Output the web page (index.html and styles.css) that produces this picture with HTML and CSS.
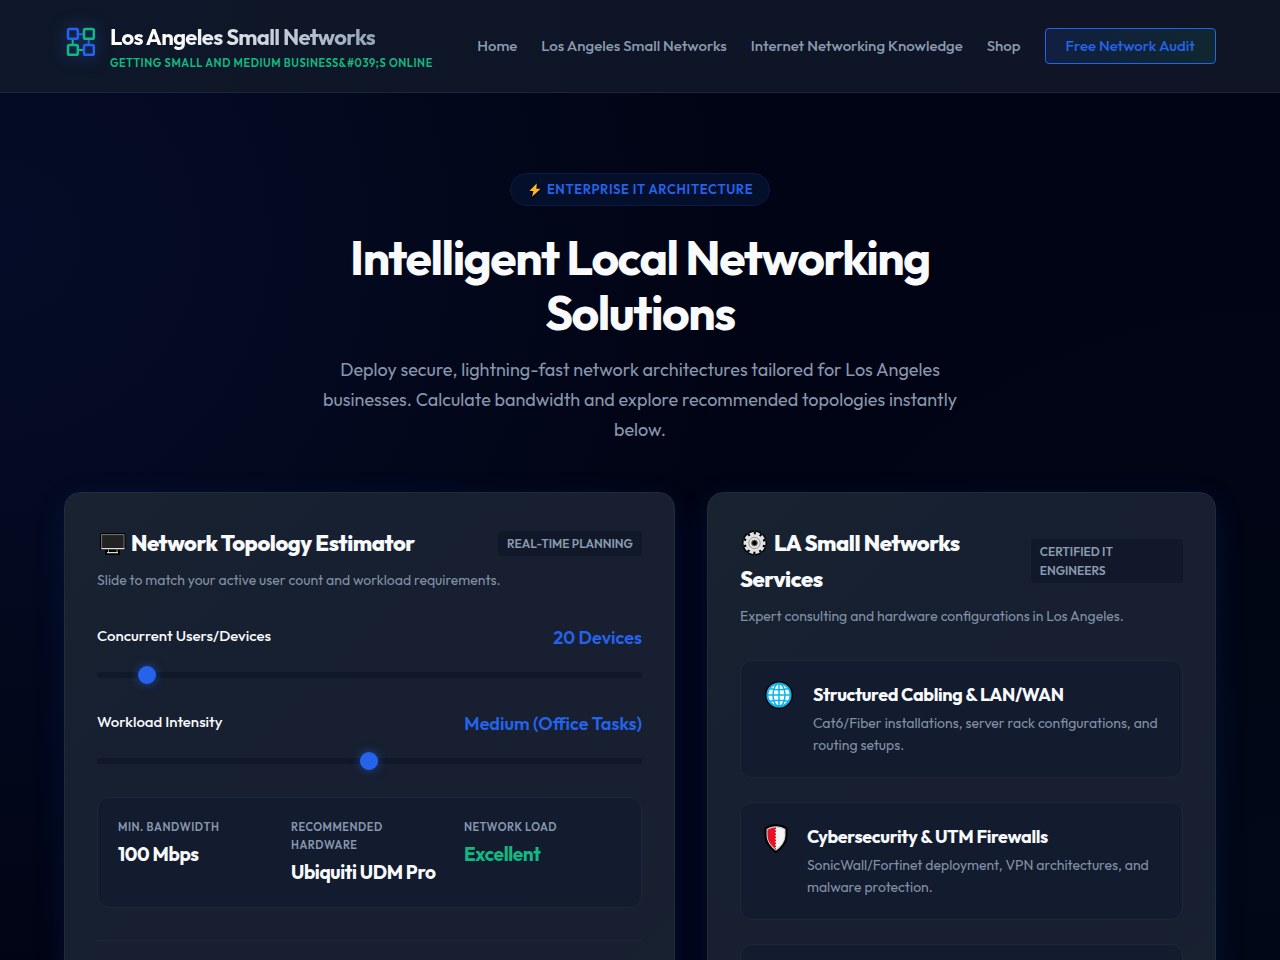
FILE: index.html
```html
<!DOCTYPE html>
<html lang="en">
<head>
<meta charset="utf-8">
<meta name="viewport" content="width=device-width, initial-scale=1">
<title>Los Angeles Small Networks</title>
<link rel="stylesheet" href="styles.css">
</head>
<body>
<header class="site-header">
  <div class="container header-inner">
    <div class="brand">
      <svg class="brand-logo" viewBox="0 0 34 34" fill="none" stroke-width="2.5" aria-hidden="true">
        <path d="M14 9.2H20M24.7 14V20" stroke="#2563eb" stroke-width="2"/>
        <path d="M8.7 14V20M14 25H20" stroke="#10b981" stroke-width="2"/>
        <rect x="4" y="4" width="9.8" height="9.8" rx="1.6" stroke="#2563eb"/>
        <rect x="20" y="4" width="9.8" height="9.8" rx="1.6" stroke="#10b981"/>
        <rect x="4" y="20" width="9.8" height="9.8" rx="1.6" stroke="#10b981"/>
        <rect x="20" y="20" width="9.8" height="9.8" rx="1.6" stroke="#2563eb"/>
      </svg>
      <div class="brand-text">
        <a class="brand-name" href="#">Los Angeles Small Networks</a>
        <span class="brand-tagline">Getting small and medium business&amp;#039;s online</span>
      </div>
    </div>
    <nav class="site-nav">
      <a class="nav-link" href="#">Home</a>
      <a class="nav-link" href="#">Los Angeles Small Networks</a>
      <a class="nav-link" href="#">Internet Networking Knowledge</a>
      <a class="nav-link" href="#">Shop</a>
      <a class="nav-cta" href="#">Free Network Audit</a>
    </nav>
  </div>
</header>
<main class="container">
  <section class="hero">
    <span class="hero-badge">
      <svg class="bolt" viewBox="0 0 12 14" aria-hidden="true"><path d="M7.6 1.2 1 7.8H4.6L3.4 12.8 11 5.8H7.2Z" fill="#fdb92c" stroke="#000" stroke-width="1.2" stroke-linejoin="round" paint-order="stroke"/></svg>
      Enterprise IT Architecture
    </span>
    <h1 class="hero-title">Intelligent Local Networking Solutions</h1>
    <p class="hero-text">Deploy secure, lightning-fast network architectures tailored for Los Angeles businesses. Calculate bandwidth and explore recommended topologies instantly below.</p>
  </section>
  <div class="panels">
    <section class="card">
      <div class="card-head">
        <h2 class="card-title"><svg class="title-icon" viewBox="0 0 34 28" aria-hidden="true">
          <path d="M4 5H27.500V20H4ZM9 20H22V25H9Z" fill="#000" stroke="#000" stroke-width="2" stroke-linejoin="round"/>
          <rect x="4.600" y="5.600" width="22.400" height="14" fill="#222" stroke="#777" stroke-width="1"/>
          <path d="M4.500 19.700H27.500M10 23.600H21" stroke="#ddd" stroke-width="1.200"/>
          <path d="M11.500 20.500V23M20 20.500V23" stroke="#999"/>
        </svg>Network Topology Estimator</h2>
        <span class="tag">Real-time Planning</span>
      </div>
      <p class="card-sub">Slide to match your active user count and workload requirements.</p>
      <div class="field">
        <div class="field-row">
          <label class="field-label" for="users">Concurrent Users/Devices</label>
          <output class="field-value" for="users">20 Devices</output>
        </div>
        <input class="slider" id="users" type="range" min="5" max="200" value="20">
      </div>
      <div class="field">
        <div class="field-row">
          <label class="field-label" for="load">Workload Intensity</label>
          <output class="field-value" for="load">Medium (Office Tasks)</output>
        </div>
        <input class="slider" id="load" type="range" min="1" max="3" value="2">
      </div>
      <dl class="stats">
        <div class="stat"><dt class="stat-label">Min. Bandwidth</dt><dd class="stat-value">100 Mbps</dd></div>
        <div class="stat"><dt class="stat-label">Recommended Hardware</dt><dd class="stat-value">Ubiquiti UDM Pro</dd></div>
        <div class="stat"><dt class="stat-label">Network Load</dt><dd class="stat-value good">Excellent</dd></div>
      </dl>
      <hr class="rule">
    </section>
    <section class="card">
      <div class="card-head">
        <h2 class="card-title"><svg class="title-icon" viewBox="0 0 34 28" aria-hidden="true">
          <g transform="translate(14.500 14)">
            <circle r="9.500" fill="none" stroke="#000" stroke-width="6" stroke-dasharray="4.460 1.508" stroke-dashoffset="2.230"/>
            <circle r="10.700" fill="#000"/>
            <circle r="9.500" fill="none" stroke="#e2e2e2" stroke-width="3" stroke-dasharray="3.900 2.069" stroke-dashoffset="1.950"/>
            <circle r="8.800" fill="#e2e2e2"/>
            <circle r="5.700" fill="none" stroke="#888" stroke-width=".8"/>
            <circle r="2.900" fill="#000" stroke="#777" stroke-width="1"/>
          </g>
        </svg>LA Small Networks Services</h2>
        <span class="tag">Certified IT Engineers</span>
      </div>
      <p class="card-sub">Expert consulting and hardware configurations in Los Angeles.</p>
      <ul class="services">
        <li class="service">
          <svg class="globe" viewBox="0 0 36 28" fill="none" aria-hidden="true">
            <circle cx="18" cy="14" r="13" fill="#fff" stroke="#000" stroke-width="2"/>
            <g stroke="#0bb3ee" stroke-width="1.500">
              <circle cx="18" cy="14" r="11.600" stroke-width="2"/>
              <ellipse cx="18" cy="14" rx="6" ry="11.600"/>
              <path d="M18 2V26M6 14H30M8.500 7.500Q18 10 27.500 7.500M8.500 20.500Q18 18 27.500 20.500"/>
            </g>
          </svg>
          <div class="service-body">
            <h3 class="service-title">Structured Cabling &amp; LAN/WAN</h3>
            <p class="service-text">Cat6/Fiber installations, server rack configurations, and routing setups.</p>
          </div>
        </li>
        <li class="service">
          <svg class="shield" viewBox="0 0 30 30" aria-hidden="true">
            <path d="M15 2.200Q21 2.200 25.500 5.500V13Q25 22 15 29Q5 22 4.500 13V5.500Q9 2.200 15 2.200Z" fill="#ccc" stroke="#000" stroke-width="2" stroke-linejoin="round"/>
            <path d="M15 4.600Q19.500 4.600 23.400 6.800V13Q23 20.500 15 26.400Z" fill="#f4f4f4"/>
            <path d="M15 4.600Q10.500 4.600 6.600 6.800V13Q7 20.500 15 26.400Z" fill="#e81224"/>
            <path d="M15.200 6V25" stroke="#f4f4f4" stroke-width="2" stroke-dasharray="1.500 1.500"/>
          </svg>
          <div class="service-body">
            <h3 class="service-title">Cybersecurity &amp; UTM Firewalls</h3>
            <p class="service-text">SonicWall/Fortinet deployment, VPN architectures, and malware protection.</p>
          </div>
        </li>
        <li class="service"></li>
      </ul>
    </section>
  </div>
</main>
</body>
</html>
```

FILE: styles.css
```css
* { box-sizing: border-box; margin: 0; padding: 0; }

body {
  color: #f8fafc;
  font-family: Outfit, Lato, "Noto Sans", sans-serif;
  font-size: 16px;
  background:
    radial-gradient(circle at 0% 25%, rgba(37, 99, 235, 0.09), transparent 50%) fixed,
    radial-gradient(circle at 100% 90%, rgba(16, 185, 129, 0.02), transparent 40%) fixed,
    #010414;
}

a { color: inherit; text-decoration: none; }

.container { max-width: 1280px; margin: 0 auto; padding: 0 64px; }

.site-header {
  background: linear-gradient(90deg, #0f182a, #0d1526 50%, #101526);
  border-bottom: 1px solid #1b2738;
}

.header-inner { display: flex; align-items: center; justify-content: space-between; min-height: 92px; }

.brand { display: flex; align-items: center; gap: 12px; }
.brand-logo { width: 34px; height: 34px; margin-bottom: 8px; filter: drop-shadow(0 0 8px rgba(37, 99, 235, 0.5)); }
.brand-text { display: flex; flex-direction: column; }

.brand-name {
  font-size: 22px;
  font-weight: 700;
  line-height: 34px;
  letter-spacing: -0.03em;
  background: linear-gradient(90deg, #fff 20%, #94a3b8);
  -webkit-background-clip: text;
  background-clip: text;
  color: transparent;
  align-self: flex-start;
}

.brand-tagline { color: #10b981; font-size: 11px; font-weight: 600; line-height: 18px; letter-spacing: 0.05em; text-transform: uppercase; }

.site-nav { display: flex; align-items: center; gap: 24px; color: #8b9ab0; font-size: 15px; font-weight: 500; line-height: 34px; white-space: nowrap; }

.nav-cta {
  padding: 0 20px;
  color: #2563eb;
  border: 1px solid #2563eb;
  border-radius: 4px;
  background: linear-gradient(90deg, #101f40, #10272f);
}

.hero { max-width: 680px; margin: 0 auto; padding: 80px 0 47px; text-align: center; }

.hero-badge {
  display: inline-flex;
  align-items: center;
  gap: 4px;
  padding: 0 16px;
  color: #2563eb;
  font-size: 13px;
  font-weight: 600;
  line-height: 31px;
  letter-spacing: 0.05em;
  text-transform: uppercase;
  background: #040f2b;
  border: 1px solid #0a1b46;
  border-radius: 17px;
  vertical-align: top;
}

.bolt { width: 16px; height: 16px; }

.hero-title { margin-top: 24px; font-size: 48px; font-weight: 700; line-height: 55px; letter-spacing: -0.03em; }
.hero-text { margin: 15px auto 0; color: #8796ad; font-size: 18px; line-height: 30px; }

.panels { display: grid; grid-template-columns: 1.2fr 1fr; gap: 32px; }

.card {
  padding: 32px;
  background: linear-gradient(135deg, #182230, #172030 25%, #171f30 60%, #182130);
  border: 1px solid #1e2c3c;
  border-radius: 16px;
  box-shadow: 0 8px 32px rgba(37, 99, 235, 0.12);
}

.card-head { display: flex; align-items: center; justify-content: space-between; }
.card-title { font-size: 22px; font-weight: 800; line-height: 36px; letter-spacing: -0.02em; }
.title-icon { width: 34px; height: 28px; vertical-align: -6px; }

.tag {
  padding: 3px 9px;
  color: #8a99ae;
  font-size: 12px;
  font-weight: 600;
  line-height: 19px;
  text-transform: uppercase;
  background: #10182a;
  border-radius: 4px;
}

.card-sub { margin-top: 8px; color: #8290a6; font-size: 14px; line-height: 22px; }

.field { margin-top: 26px; }
.card-sub + .field { margin-top: 33px; }
.field-row { display: flex; justify-content: space-between; line-height: 28px; }
.field-label { font-size: 15px; font-weight: 500; line-height: 24px; }
.field-value { color: #2563eb; font-size: 18px; font-weight: 600; }

.slider {
  display: block;
  width: 100%;
  height: 18px;
  margin-top: 14px;
  appearance: none;
  -webkit-appearance: none;
  background: none;
}

.slider::-webkit-slider-runnable-track { height: 6px; background: #10182a; border-radius: 3px; }

.slider::-webkit-slider-thumb {
  -webkit-appearance: none;
  width: 18px;
  height: 18px;
  margin-top: -6px;
  background: #2563eb;
  border-radius: 50%;
  box-shadow: 0 0 10px rgba(37, 99, 235, 0.6);
}

.stats {
  display: grid;
  grid-template-columns: repeat(3, 1fr);
  gap: 16px;
  margin-top: 27px;
  padding: 20px;
  min-height: 111px;
  background: #131c2e;
  border: 1px solid #1b2839;
  border-radius: 12px;
}

.stat-label { color: #8796ad; font-size: 11px; font-weight: 600; line-height: 18px; letter-spacing: 0.05em; text-transform: uppercase; }
.stat-value { margin-top: 4px; font-size: 19px; font-weight: 700; line-height: 28px; white-space: nowrap; letter-spacing: -0.02em; }
.good { color: #10b981; }

.rule { margin-top: 32px; border: 0; border-top: 1px solid #1c2838; }

.services { display: grid; gap: 24px; margin-top: 33px; list-style: none; }

.service {
  display: flex;
  align-items: flex-start;
  gap: 16px;
  min-height: 118px;
  padding: 20px;
  background: #131b2e;
  border: 1px solid #1b2839;
  border-radius: 12px;
}

.globe { flex: none; width: 36px; height: 28px; }
.shield { flex: none; width: 30px; height: 30px; }
.service-title { font-size: 18px; font-weight: 700; line-height: 28px; letter-spacing: -0.02em; }
.service-text { margin-top: 3px; color: #8290a6; font-size: 14px; line-height: 22px; }
```
